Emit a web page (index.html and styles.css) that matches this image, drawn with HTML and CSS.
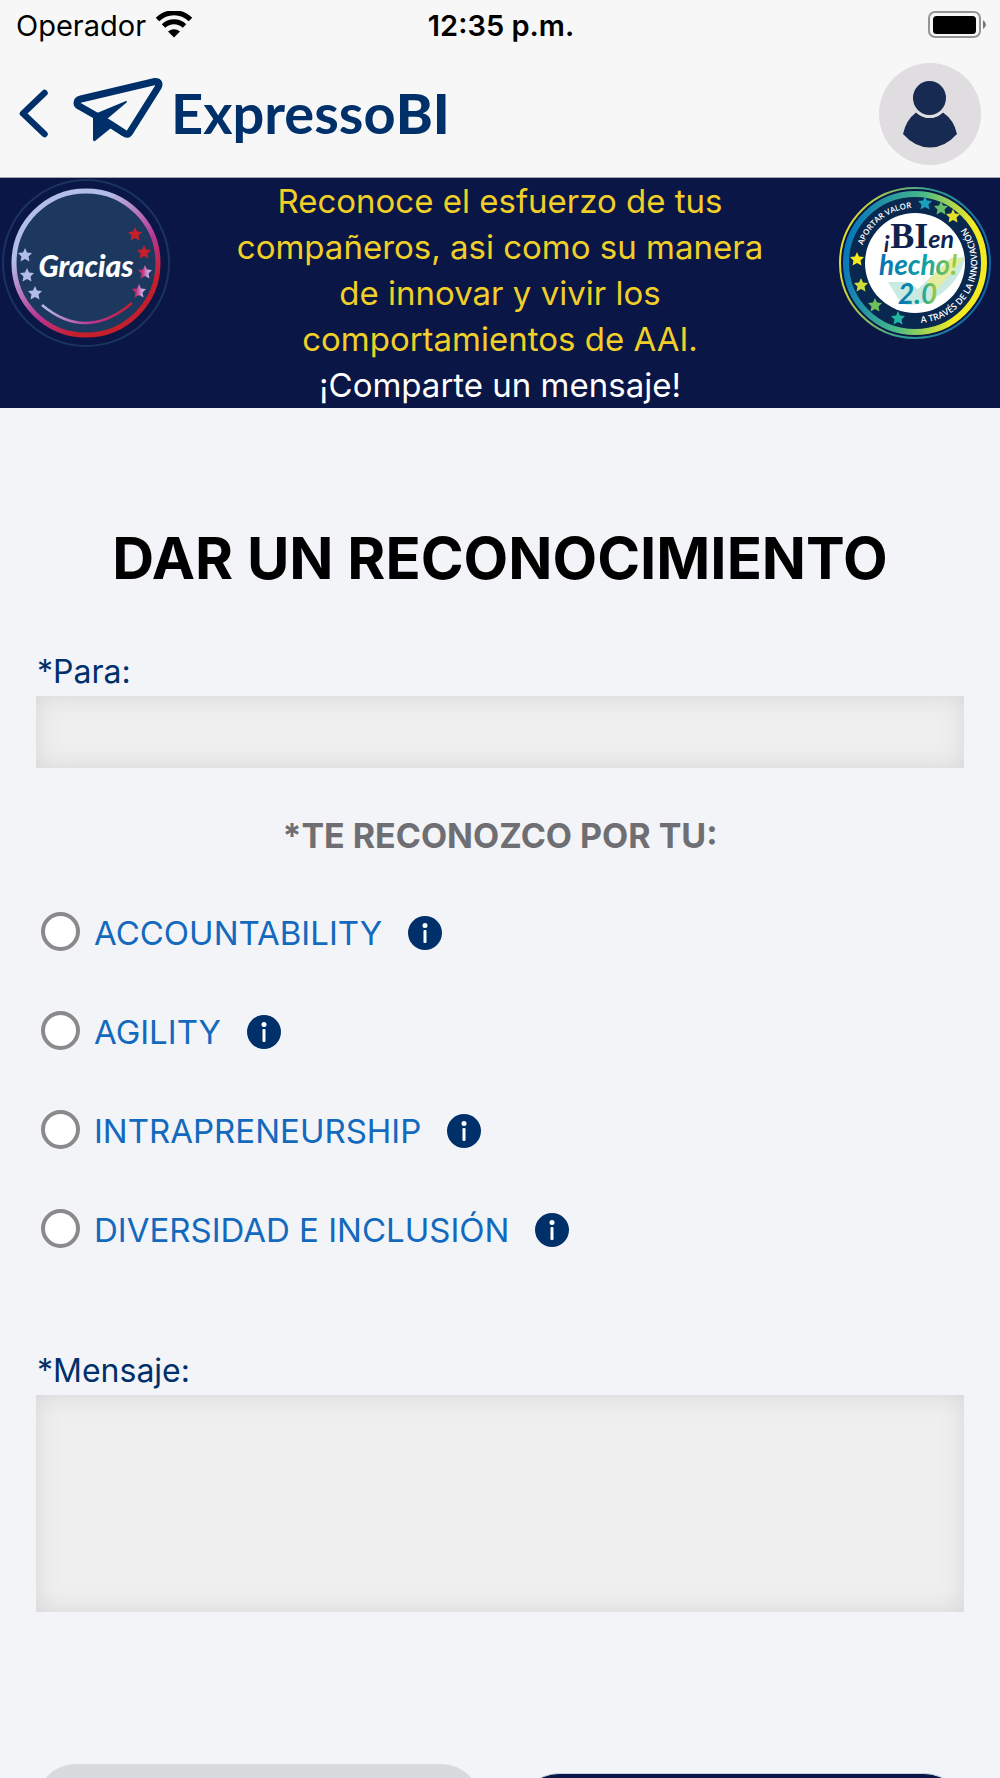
FILE: index.html
```
<!DOCTYPE html>
<html lang="es">

<head>
    <meta charset="UTF-8">
    <title>ExpressoBI - Dar un reconocimiento</title>
    <meta name="viewport" content="width=device-width, initial-scale=1.0">
    <link rel="stylesheet" href="styles.css">
</head>

<body>
    <header class="header">
        <div class="status">
            <div class="carrier">
                <span>Operador</span>
                <svg width="38" height="28" viewBox="0 0 38 28">
                    <g fill="none" stroke="#000" stroke-width="5">
                        <path d="M2.500 8.500a23.500 23.500 0 0 1 33 0" />
                        <path d="M8.500 15a15 15 0 0 1 21 0" />
                    </g>
                    <path d="M13 20.500q6-4.500 12 0l-6 6z" />
                </svg>
            </div>
            <div class="time">12:35 p.m.</div>
            <svg class="battery" width="58" height="28" viewBox="0 0 58 28">
                <rect x="1" y="1" width="51" height="25" rx="6" fill="none" stroke="#949494" stroke-width="2" />
                <rect x="5" y="5" width="43" height="18" rx="3.500" />
                <path d="M55 9q6 4.500 0 9z" fill="#777" />
            </svg>
        </div>
        <nav class="nav">
            <button class="back" aria-label="Atrás">
                <svg width="30" height="50" viewBox="0 0 30 50">
                    <path d="M26.500 4L5 24.500 26.500 45" fill="none" stroke="#003069" stroke-width="6.500" stroke-linecap="round" stroke-linejoin="round" />
                </svg>
            </button>
            <a class="logo" href="#">
                <svg width="92" height="72" viewBox="0 0 92 72">
                    <path d="M4 26q0-3 4-4L82 4.500q6 0 3 6L57 55q-2 4-6 1L34 45 6 29q-2-1-2-3z" fill="none" stroke="#003069" stroke-width="7" stroke-linejoin="round" />
                    <path d="M16 33l8 3 29-12q2 0 0 2L34 42l4 9-16 13q-2 1-2-2V40z" fill="#003069" />
                </svg>
                <span class="logo-text">Expresso<b>BI</b></span>
            </a>
            <button class="avatar" aria-label="Perfil">
                <svg width="102" height="102" viewBox="0 0 102 102">
                    <path d="M37 49.500q14 11 27 0Q75 57 78 71 66 84.500 51 84.500T24 71Q27 57 37 49.500z" fill="#172a52" />
                    <ellipse cx="50.500" cy="35" rx="19" ry="20" fill="#dfdddf" />
                    <ellipse cx="50.500" cy="35" rx="16.500" ry="17" fill="#172a52" />
                </svg>
            </button>
        </nav>
    </header>

    <main class="content">
        <section class="banner">
            <svg class="badge" width="172" height="170" viewBox="0 0 172 170">
                <defs>
                    <linearGradient id="ring" x1="0.150" y1="0" x2="0.850" y2="1">
                        <stop offset="0.250" stop-color="#b3bee8" />
                        <stop offset="0.600" stop-color="#b93591" />
                        <stop offset="0.800" stop-color="#c51f2b" />
                    </linearGradient>
                    <linearGradient id="smile">
                        <stop offset="0" stop-color="#b3bee8" />
                        <stop offset="0.550" stop-color="#b93591" />
                        <stop offset="1" stop-color="#c51f2b" />
                    </linearGradient>
                    <linearGradient id="duo">
                        <stop offset="0.300" stop-color="#c42b72" />
                        <stop offset="0.700" stop-color="#c9a5de" />
                    </linearGradient>
                    <path id="star" d="M0-7l2 4.500 5 .5-3.500 3.500 1 5L0 4l-4.500 2.500 1-5L-7-2l5-.5z" />
                </defs>
                <circle cx="86" cy="85" r="83" fill="none" stroke="#1b345f" stroke-width="2" />
                <circle cx="86" cy="85" r="72" fill="#1c385f" stroke="url(#ring)" stroke-width="5" />
                <text class="gracias" x="86" y="99" text-anchor="middle">Gracias</text>
                <g fill="#b3bee8">
                    <use href="#star" x="25" y="77" />
                    <use href="#star" x="27" y="97" />
                    <use href="#star" x="35" y="115" />
                </g>
                <use href="#star" x="135" y="56" fill="#c51f2b" />
                <use href="#star" x="144" y="74" fill="#c51f2b" />
                <use href="#star" x="145" y="94" fill="url(#duo)" />
                <use href="#star" x="139" y="113" fill="url(#duo)" />
                <path d="M42 127q44 37 90-2" fill="none" stroke="url(#smile)" stroke-width="2.500" />
            </svg>

            <p class="banner-text">
                Reconoce el esfuerzo de tus<br>
                compañeros, asi como su manera<br>
                de innovar y vivir los<br>
                comportamientos de AAI.<br>
                <span>¡Comparte un mensaje!</span>
            </p>

            <svg class="badge" width="172" height="170" viewBox="0 0 172 170">
                <defs>
                    <linearGradient id="valor" x1="0" y1="0.400" x2="1" y2="0.600">
                        <stop offset="0" stop-color="#0877ba" />
                        <stop offset="0.450" stop-color="#46b889" />
                        <stop offset="0.850" stop-color="#f2eb22" />
                    </linearGradient>
                    <linearGradient id="edge" x1="0" y1="0.400" x2="1" y2="0.600">
                        <stop offset="0" stop-color="#e4df28" />
                        <stop offset="0.500" stop-color="#35a092" />
                        <stop offset="1" stop-color="#0b63a5" />
                    </linearGradient>
                    <linearGradient id="hecho">
                        <stop offset="0" stop-color="#086fb6" />
                        <stop offset="0.600" stop-color="#10a3a0" />
                        <stop offset="1" stop-color="#a5cf38" />
                    </linearGradient>
                    <path id="arcTop" d="M32 85a55 55 0 0 1 110 0" />
                    <path id="arcBottom" d="M87 145a60 60 0 0 0 44-103" />
                </defs>
                <circle cx="87" cy="85" r="75" fill="none" stroke="url(#edge)" stroke-width="2" />
                <circle cx="87" cy="85" r="69" fill="#08284f" stroke="url(#valor)" stroke-width="6" />
                <circle cx="87" cy="85" r="50" fill="#fff" />
                <path d="M60 104l20 0 10 7 33-31 14-1q-3 14-10 23-16 20-36 24-14 2-18-1z" fill="#bce3dc" opacity="0.800" />
                <path d="M99 103l24-23 13 0-30 35z" fill="#e5eda0" />
                <text class="ring-text top"><textPath href="#arcTop" startOffset="18">APORTAR VALOR</textPath></text>
                <text class="ring-text"><textPath href="#arcBottom" startOffset="6">A TRAVÉS DE LA INNOVACIÓN</textPath></text>
                <text x="56" y="70" class="bi">¡<tspan class="bi-big">BI</tspan>en</text>
                <text x="51" y="97" class="hecho">hecho!</text>
                <text x="70" y="126" class="hecho">2.0</text>
                <use href="#star" x="97" y="25" fill="#18a0bd" />
                <use href="#star" x="113" y="30" fill="#68bd6c" />
                <use href="#star" x="125" y="38" fill="#e4df28" />
                <use href="#star" x="29" y="81" fill="#f7ea1c" />
                <use href="#star" x="33" y="107" fill="#cfdc38" />
                <use href="#star" x="47" y="127" fill="#6fc15b" />
                <use href="#star" x="70" y="140" fill="#20b5a0" />
            </svg>
        </section>

        <form class="form">
            <h1>DAR UN RECONOCIMIENTO</h1>

            <label class="label" for="para">*Para:</label>
            <input class="field" type="text" id="para">

            <fieldset class="options">
                <legend>*TE RECONOZCO POR TU:</legend>
                <div class="option">
                    <input type="radio" name="tipo" id="accountability">
                    <label for="accountability">ACCOUNTABILITY</label>
                    <button type="button" class="info" aria-label="Información">
                        <svg width="34" height="34" viewBox="0 0 34 34">
                            <circle cx="17" cy="17" r="17" fill="#003069" />
                            <circle cx="17" cy="9.500" r="2.500" fill="#fff" />
                            <rect x="15.500" y="14" width="3" height="13" rx="1" fill="#fff" />
                        </svg>
                    </button>
                </div>
                <div class="option">
                    <input type="radio" name="tipo" id="agility">
                    <label for="agility">AGILITY</label>
                    <button type="button" class="info" aria-label="Información">
                        <svg width="34" height="34" viewBox="0 0 34 34">
                            <circle cx="17" cy="17" r="17" fill="#003069" />
                            <circle cx="17" cy="9.500" r="2.500" fill="#fff" />
                            <rect x="15.500" y="14" width="3" height="13" rx="1" fill="#fff" />
                        </svg>
                    </button>
                </div>
                <div class="option">
                    <input type="radio" name="tipo" id="intrapreneurship">
                    <label for="intrapreneurship">INTRAPRENEURSHIP</label>
                    <button type="button" class="info" aria-label="Información">
                        <svg width="34" height="34" viewBox="0 0 34 34">
                            <circle cx="17" cy="17" r="17" fill="#003069" />
                            <circle cx="17" cy="9.500" r="2.500" fill="#fff" />
                            <rect x="15.500" y="14" width="3" height="13" rx="1" fill="#fff" />
                        </svg>
                    </button>
                </div>
                <div class="option">
                    <input type="radio" name="tipo" id="diversidad">
                    <label for="diversidad">DIVERSIDAD E INCLUSIÓN</label>
                    <button type="button" class="info" aria-label="Información">
                        <svg width="34" height="34" viewBox="0 0 34 34">
                            <circle cx="17" cy="17" r="17" fill="#003069" />
                            <circle cx="17" cy="9.500" r="2.500" fill="#fff" />
                            <rect x="15.500" y="14" width="3" height="13" rx="1" fill="#fff" />
                        </svg>
                    </button>
                </div>
            </fieldset>

            <label class="label" for="mensaje">*Mensaje:</label>
            <textarea class="field message" id="mensaje"></textarea>

            <div class="actions">
                <button type="button" class="btn cancel" aria-label="Cancelar"></button>
                <button type="submit" class="btn send" aria-label="Enviar"></button>
            </div>
        </form>
    </main>
</body>

</html>
```

FILE: styles.css
```
* {
    box-sizing: border-box;
}

body {
    margin: 0;
    height: 100vh;
    display: flex;
    flex-direction: column;
    font-family: Inter, "Liberation Sans", sans-serif;
    font-size: 33px;
    background: #f3f4f8;
    overflow: hidden;
}

button {
    padding: 0;
    border: none;
    background: none;
    cursor: pointer;
}

svg {
    display: block;
}

/* header */
.header {
    flex: none;
    background: #f7f7f7;
    border-bottom: 1px solid #a5a6ad;
}

.status {
    display: grid;
    grid-template-columns: 1fr auto 1fr;
    align-items: center;
    height: 50px;
    padding: 0 14px 0 16px;
    font-size: 29px;
}

.carrier {
    display: flex;
    align-items: center;
    gap: 9px;
}

.time {
    font-weight: 600;
}

.battery {
    justify-self: end;
}

.nav {
    display: flex;
    align-items: center;
    height: 127px;
    padding: 0 19px 0 18px;
}

.logo {
    display: flex;
    align-items: center;
    gap: 6px;
    margin-left: 25px;
    padding-bottom: 2px;
    color: #003069;
    text-decoration: none;
}

.logo-text {
    font-family: Lato, sans-serif;
    font-size: 56px;
    font-weight: 700;
    line-height: 72px;
}

.logo-text b {
    font-weight: 900;
}

.avatar {
    margin-left: auto;
    border-radius: 50%;
    background: #dfdddf;
}

/* banner */
.content {
    flex: 1;
    min-height: 0;
    overflow: hidden;
}

.banner {
    display: flex;
    justify-content: space-between;
    background: #0a1645;
    color: #f0cf28;
}

.badge {
    flex: none;
}

.banner-text {
    margin: 0;
    line-height: 46px;
    text-align: center;
}

.banner-text span {
    color: #fff;
}

.gracias {
    font-family: Lato, cursive;
    font-size: 30px;
    font-weight: 900;
    font-style: italic;
    fill: #fff;
}

.ring-text {
    font-family: "Open Sans", sans-serif;
    font-size: 9px;
    font-weight: 600;
    fill: #fff;
}

.ring-text.top {
    font-size: 8px;
}

.bi {
    font-family: Lato, sans-serif;
    font-size: 25px;
    font-weight: 700;
    font-style: italic;
    fill: #10234e;
}

.bi-big {
    font-family: "Liberation Serif", serif;
    font-size: 36px;
    font-style: normal;
}

.hecho {
    font-family: Lato, cursive;
    font-size: 28px;
    font-weight: 700;
    font-style: italic;
    fill: url(#hecho);
}

/* form */
.form {
    padding: 110px 36px 0;
}

h1 {
    margin: 0 0 54px;
    font-size: 58px;
    line-height: 80px;
    text-align: center;
}

.label {
    display: block;
    margin-bottom: 4px;
    padding-left: 1px;
    font-size: 32px;
    line-height: 40px;
    color: #003069;
}

.field {
    display: block;
    width: 100%;
    height: 72px;
    margin: 0;
    padding: 12px 20px;
    border: none;
    border-radius: 0;
    background: #efefef;
    box-shadow: inset 0 0 24px #d5d5d5;
    font: inherit;
}

.message {
    height: 217px;
    resize: none;
}

.options {
    margin: 0 0 52px;
    padding: 0;
    border: none;
}

.options legend {
    width: 100%;
    padding: 48px 0 47px;
    font-size: 34px;
    line-height: 40px;
    font-weight: 700;
    text-align: center;
    color: #6e6e73;
}

.option {
    display: flex;
    align-items: center;
    height: 60px;
    margin-bottom: 39px;
    padding-left: 5px;
    color: #1269bd;
}

.option input {
    appearance: none;
    width: 39px;
    height: 39px;
    margin: 0 14px 4px 0;
    border: 4px solid #8a8a8d;
    border-radius: 50%;
    background: #fff;
}

.option input:checked {
    background: #1269bd;
}

.info {
    margin-left: 26px;
}

.actions {
    display: flex;
    justify-content: space-between;
    align-items: center;
    margin-top: 152px;
}

.btn {
    width: 48%;
    border-radius: 40px;
}

.cancel {
    height: 98px;
    background: #d9dade;
}

.send {
    height: 80px;
    border-top: 1px solid #c5d6e0;
    background: #0a1645;
}
```
